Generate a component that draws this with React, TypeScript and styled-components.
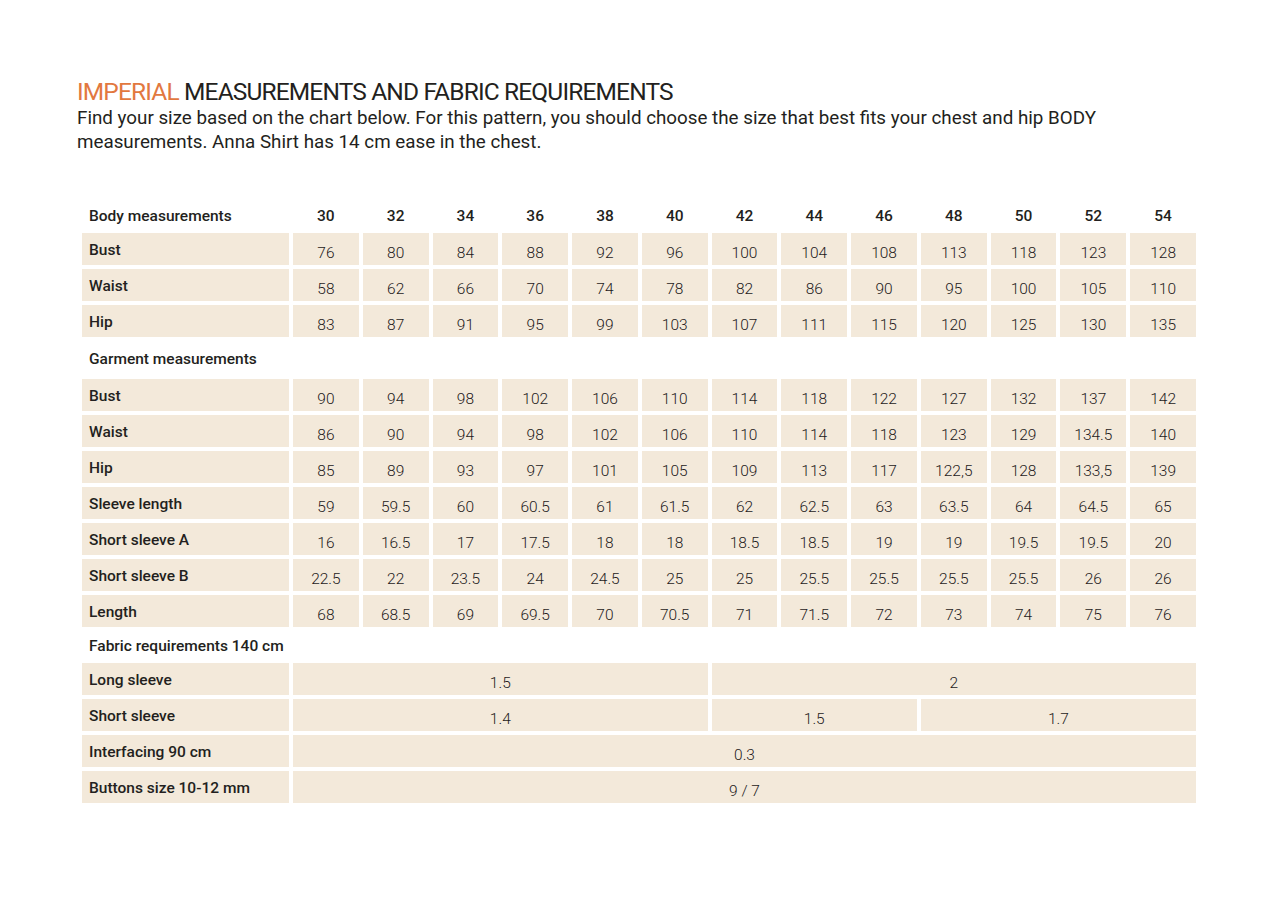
import React from "react";
import styled, { createGlobalStyle } from "styled-components";

const GlobalStyle = createGlobalStyle`
  html, body { margin: 0; padding: 0; background: #ffffff; }
  body { font-family: Roboto, "Liberation Sans", Arial, sans-serif; color: #231f20; }
`;

const Page = styled.div`
  width: 1276px;
  min-height: 909px;
  box-sizing: border-box;
  padding: 78px 0 0 77px;
`;

const Title = styled.h1`
  margin: 0;
  font-family: Roboto, "Liberation Sans", sans-serif;
  font-weight: 400;
  font-size: 24.5px;
  line-height: 28px;
  letter-spacing: -0.85px;
  color: #231f20;
  text-transform: uppercase;
`;

const Accent = styled.span`
  color: #e2783f;
`;

const Intro = styled.p`
  margin: 0;
  width: 1070px;
  font-family: Roboto, "Liberation Sans", sans-serif;
  font-weight: 400;
  font-size: 18.8px;
  line-height: 24px;
  color: #231f20;
`;

const Table = styled.div`
  margin: 47px 0 0 5px;
  width: 1114px;
  display: grid;
  grid-template-columns: 207px repeat(13, 1fr);
  column-gap: 4px;
  row-gap: 4px;
`;

const HeadLabel = styled.div<{ $h: number }>`
  grid-column: 1;
  height: ${(p) => p.$h}px;
  display: flex;
  align-items: center;
  padding: 1px 0 0 7px;
  box-sizing: border-box;
  font-size: 15.5px;
  font-weight: 500;
  color: #231f20;
  white-space: nowrap;
`;

const HeadSpacer = styled.div`
  grid-column: 2 / span 13;
`;

const SizeHead = styled.div`
  display: flex;
  align-items: center;
  justify-content: center;
  padding-top: 1px;
  font-size: 15.5px;
  font-weight: 500;
  color: #231f20;
`;

const RowLabel = styled.div`
  grid-column: 1;
  height: 32px;
  box-sizing: border-box;
  background: #f3e9da;
  padding: 7px 0 0 7px;
  font-size: 15.5px;
  line-height: 20px;
  font-weight: 500;
  color: #231f20;
  white-space: nowrap;
`;

const Cell = styled.div<{ $span?: number }>`
  grid-column: span ${(p) => p.$span ?? 1};
  height: 32px;
  box-sizing: border-box;
  background: #f3e9da;
  padding-top: 10px;
  text-align: center;
  font-size: 15.5px;
  line-height: 20px;
  font-weight: 300;
  color: #1e1a1b;
`;

const sizes = ["30", "32", "34", "36", "38", "40", "42", "44", "46", "48", "50", "52", "54"];

const body: [string, string[]][] = [
  ["Bust", ["76", "80", "84", "88", "92", "96", "100", "104", "108", "113", "118", "123", "128"]],
  ["Waist", ["58", "62", "66", "70", "74", "78", "82", "86", "90", "95", "100", "105", "110"]],
  ["Hip", ["83", "87", "91", "95", "99", "103", "107", "111", "115", "120", "125", "130", "135"]],
];

const garment: [string, string[]][] = [
  ["Bust", ["90", "94", "98", "102", "106", "110", "114", "118", "122", "127", "132", "137", "142"]],
  ["Waist", ["86", "90", "94", "98", "102", "106", "110", "114", "118", "123", "129", "134.5", "140"]],
  ["Hip", ["85", "89", "93", "97", "101", "105", "109", "113", "117", "122,5", "128", "133,5", "139"]],
  ["Sleeve length", ["59", "59.5", "60", "60.5", "61", "61.5", "62", "62.5", "63", "63.5", "64", "64.5", "65"]],
  ["Short sleeve A", ["16", "16.5", "17", "17.5", "18", "18", "18.5", "18.5", "19", "19", "19.5", "19.5", "20"]],
  ["Short sleeve B", ["22.5", "22", "23.5", "24", "24.5", "25", "25", "25.5", "25.5", "25.5", "25.5", "26", "26"]],
  ["Length", ["68", "68.5", "69", "69.5", "70", "70.5", "71", "71.5", "72", "73", "74", "75", "76"]],
];

const fabric: [string, [string, number][]][] = [
  ["Long sleeve", [["1.5", 6], ["2", 7]]],
  ["Short sleeve", [["1.4", 6], ["1.5", 3], ["1.7", 4]]],
  ["Interfacing 90 cm", [["0.3", 13]]],
  ["Buttons size 10-12 mm", [["9 / 7", 13]]],
];

export default function App() {
  return (
    <>
      <GlobalStyle />
      <Page>
        <Title>
          <Accent>Imperial</Accent> measurements and fabric requirements
        </Title>
        <Intro>
          Find your size based on the chart below. For this pattern, you should choose the size that best fits your chest and hip BODY measurements. Anna Shirt has 14 cm ease in the chest.
        </Intro>
        <Table>
          <HeadLabel $h={28}>Body measurements</HeadLabel>
          {sizes.map((s) => (
            <SizeHead key={s}>{s}</SizeHead>
          ))}
          {body.map(([label, vals]) => (
            <React.Fragment key={"b" + label}>
              <RowLabel>{label}</RowLabel>
              {vals.map((v, i) => (
                <Cell key={i}>{v}</Cell>
              ))}
            </React.Fragment>
          ))}
          <HeadLabel $h={34}>Garment measurements</HeadLabel>
          <HeadSpacer />
          {garment.map(([label, vals]) => (
            <React.Fragment key={"g" + label}>
              <RowLabel>{label}</RowLabel>
              {vals.map((v, i) => (
                <Cell key={i}>{v}</Cell>
              ))}
            </React.Fragment>
          ))}
          <HeadLabel $h={28}>Fabric requirements 140 cm</HeadLabel>
          <HeadSpacer />
          {fabric.map(([label, vals]) => (
            <React.Fragment key={"f" + label}>
              <RowLabel>{label}</RowLabel>
              {vals.map(([v, span], i) => (
                <Cell key={i} $span={span}>
                  {v}
                </Cell>
              ))}
            </React.Fragment>
          ))}
        </Table>
      </Page>
    </>
  );
}
